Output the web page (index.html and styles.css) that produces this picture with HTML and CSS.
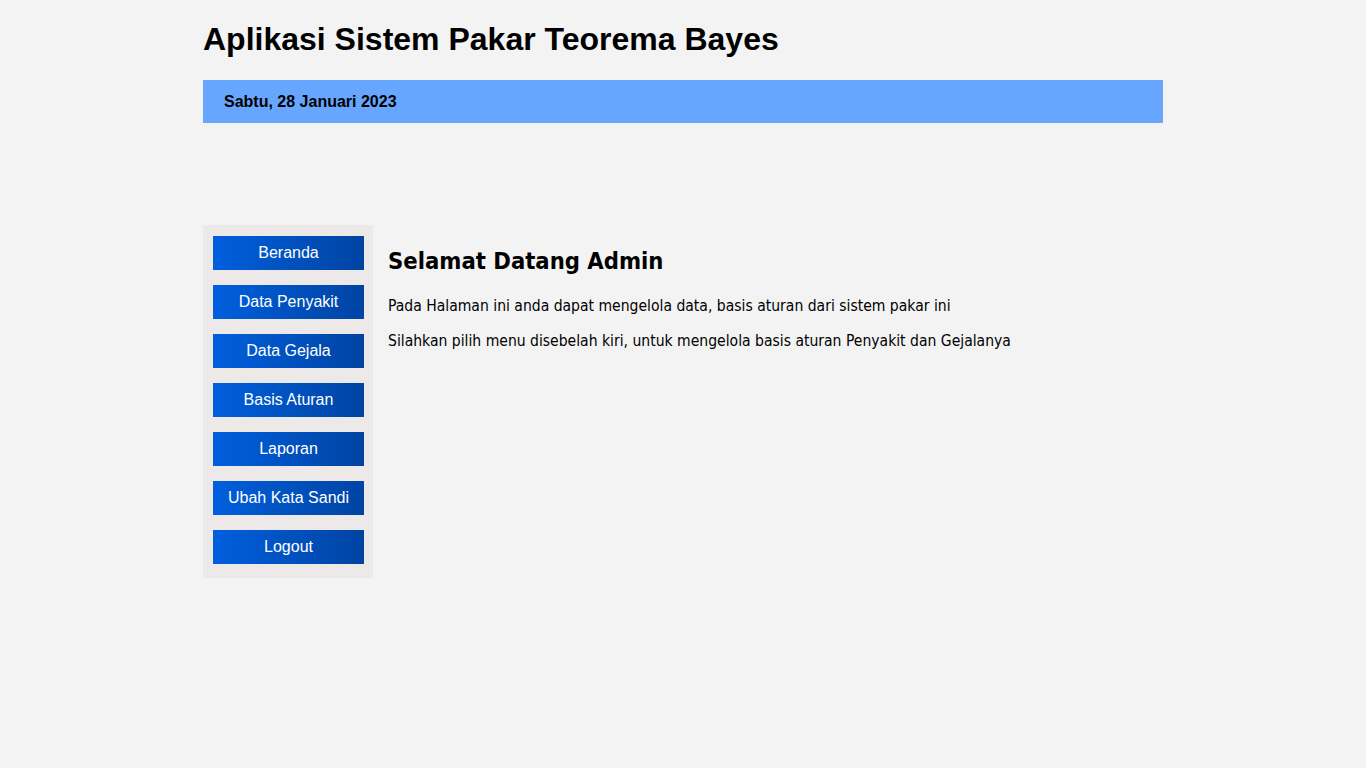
FILE: index.html
```html
<!DOCTYPE html>
<html lang="id">
<head>
<meta charset="utf-8">
<title>Aplikasi Sistem Pakar Teorema Bayes</title>
<link rel="stylesheet" href="styles.css">
</head>
<body>
<div class="wrap">
  <h1 class="title">Aplikasi Sistem Pakar Teorema Bayes</h1>
  <div class="datebar">Sabtu, 28 Januari 2023</div>
  <div class="main">
    <nav class="sidebar">
      <a class="btn" href="#">Beranda</a>
      <a class="btn" href="#">Data Penyakit</a>
      <a class="btn" href="#">Data Gejala</a>
      <a class="btn" href="#">Basis Aturan</a>
      <a class="btn" href="#">Laporan</a>
      <a class="btn" href="#">Ubah Kata Sandi</a>
      <a class="btn" href="#">Logout</a>
    </nav>
    <section class="content">
      <h2 class="welcome">Selamat Datang Admin</h2>
      <p class="text">Pada Halaman ini anda dapat mengelola data, basis aturan dari sistem pakar ini</p>
      <p class="text">Silahkan pilih menu disebelah kiri, untuk mengelola basis aturan Penyakit dan Gejalanya</p>
    </section>
  </div>
</div>
</body>
</html>
```
FILE: styles.css
```css
html, body {
  margin: 0;
  padding: 0;
  background: #f3f3f3;
}
body {
  font-family: "Liberation Sans", Arial, sans-serif;
  color: #000;
}
.wrap {
  width: 960px;
  margin: 0 auto;
  padding-top: 19px;
}
.title {
  margin: 0;
  font-size: 32px;
  font-weight: bold;
  line-height: 40px;
  height: 40px;
}
.datebar {
  margin-top: 21px;
  height: 43px;
  background: #66a6ff;
  font-size: 16px;
  font-weight: bold;
  line-height: 43px;
  padding-left: 21px;
  box-sizing: border-box;
}
.main {
  display: flex;
  align-items: flex-start;
  margin-top: 102px;
}
.sidebar {
  width: 170px;
  box-sizing: border-box;
  background: #ede9e8;
  padding: 11px 9px 14px 10px;
  display: flex;
  flex-direction: column;
  gap: 15px;
}
.btn {
  display: block;
  height: 34px;
  line-height: 33px;
  text-align: center;
  color: #fff;
  text-decoration: none;
  font-size: 16px;
  background: linear-gradient(to right, #005fdd, #0044a3);
}
.content {
  padding-left: 15px;
  padding-top: 20px;
  font-family: "DejaVu Sans Condensed", Tahoma, sans-serif;
}
.welcome {
  margin: 0 0 19px;
  font-size: 23.6px;
  line-height: 32px;
  font-weight: bold;
}
.text {
  margin: 0 0 15px;
  font-size: 15.55px;
  line-height: 20px;
}
```
